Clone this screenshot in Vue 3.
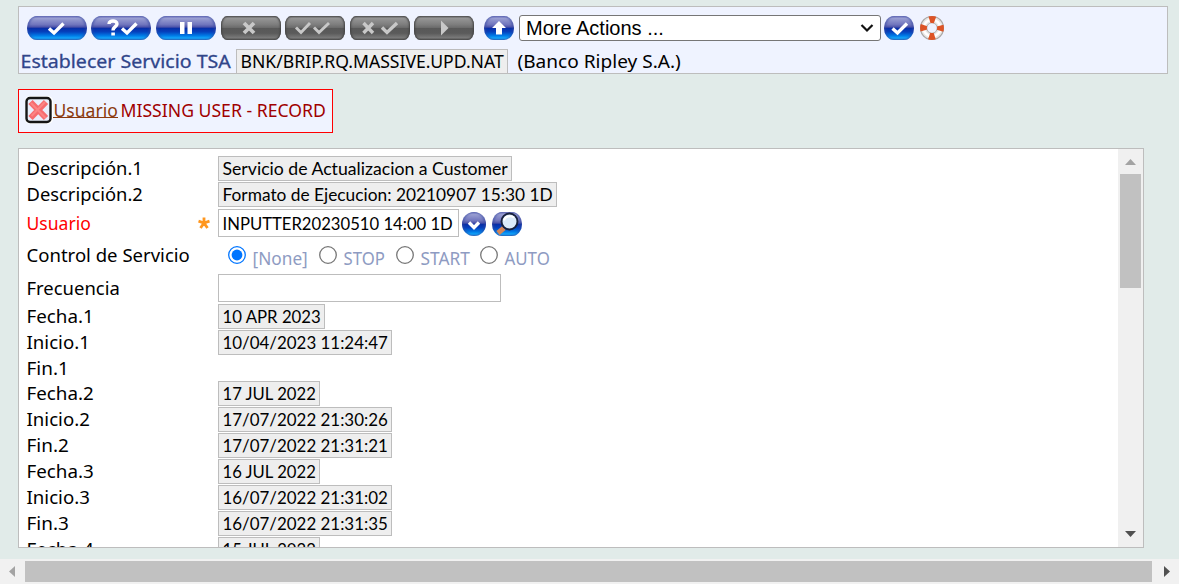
<script setup>
import { h } from 'vue'

// Single line of text fitted to a known advance width.
const Line = (p) =>
  h('svg', { class: 'line', width: p.w, height: p.h || 25 }, [
    h('text', { x: 0.5, y: p.base || 19, textLength: p.w - 0.7, lengthAdjust: 'spacingAndGlyphs' }, p.text),
  ])
Line.props = ['text', 'w', 'h', 'base']

const buttons = [
  { id: 'commit', on: true, gap: 4 },
  { id: 'validate', on: true, gap: 5 },
  { id: 'hold', on: true, gap: 4.5 },
  { id: 'delete', gap: 4.5 },
  { id: 'authorise', gap: 4.5 },
  { id: 'reverse', gap: 4.5 },
  { id: 'next', gap: 10 },
]

const intro = [
  { label: 'Descripción.1', lw: 117, value: 'Servicio de Actualizacion a Customer', vw: 286 },
  { label: 'Descripción.2', lw: 117, value: 'Formato de Ejecucion: 20210907 15:30 1D', vw: 331 },
]
const options = [
  { text: '[None]', w: 56, box: 91, checked: true },
  { text: 'STOP', w: 42, box: 77 },
  { text: 'START', w: 50, box: 84 },
  { text: 'AUTO', w: 46, box: 80 },
]
const history = [
  { label: 'Fecha.1', lw: 68, value: '10 APR 2023', vw: 99 },
  { label: 'Inicio.1', lw: 64, value: '10/04/2023 11:24:47', vw: 166 },
  { label: 'Fin.1', lw: 43, short: true },
  { label: 'Fecha.2', lw: 68, value: '17 JUL 2022', vw: 94 },
  { label: 'Inicio.2', lw: 64, value: '17/07/2022 21:30:26', vw: 166 },
  { label: 'Fin.2', lw: 43, value: '17/07/2022 21:31:21', vw: 166 },
  { label: 'Fecha.3', lw: 68, value: '16 JUL 2022', vw: 94 },
  { label: 'Inicio.3', lw: 64, value: '16/07/2022 21:31:02', vw: 166 },
  { label: 'Fin.3', lw: 43, value: '16/07/2022 21:31:35', vw: 166 },
  { label: 'Fecha.4', lw: 68, value: '15 JUL 2022', vw: 94 },
]
</script>

<template>
  <main class="page">
    <header class="toolbar">
      <div class="actions">
        <button v-for="b in buttons" :key="b.id" class="pill" :class="{ off: !b.on }" :style="{ marginRight: b.gap + 'px' }">
          <svg width="60" height="24" viewBox="0 0 60 24">
            <path v-if="b.id === 'commit'" class="stroke" d="M22 12.5l5 4.5 9.500-9.500" />
            <g v-else-if="b.id === 'validate'">
              <path class="stroke" d="M18 8c0-4 8-4 8 0 0 2.700-4 2.800-4 6.500" />
              <rect class="fill" x="20.300" y="16.500" width="3.600" height="3" />
              <path class="stroke" d="M31 12.500l5 4.500 9.500-9.500" />
            </g>
            <path v-else-if="b.id === 'hold'" class="fill" d="M24 6h4.500v12H24zM31.500 6H36v12h-4.500z" />
            <path v-else-if="b.id === 'delete'" class="stroke thick" d="M23 7l10 10M33 7L23 17" />
            <path v-else-if="b.id === 'authorise'" class="stroke thin" d="M11 11.500l5 5 9-9.500M29 11.500l5 5 10-9.500" />
            <path v-else-if="b.id === 'reverse'" class="stroke" d="M13.500 7l9.500 10M23 7l-9.500 10M32 11.500l5 5 10-9.500" />
            <path v-else class="fill" d="M27 4.500l7.500 7.500-7.500 7.500z" />
          </svg>
        </button>
        <button class="pill small up">
          <svg width="30" height="24"><path class="fill" d="M15 5l7 7h-4v6.500h-6V12H8z" /></svg>
        </button>
        <div class="select">
          <span>More Actions ...</span>
          <svg width="14" height="10"><path d="M1.500 2l5.500 5.500L12.500 2" fill="none" stroke="#111" stroke-width="2.200" /></svg>
        </div>
        <button class="pill small go">
          <svg width="30" height="24"><path class="stroke" d="M8.500 12.500l5 4.500 9.500-9.500" /></svg>
        </button>
        <svg class="buoy" width="24" height="24" viewBox="0 0 24 24">
          <circle cx="12" cy="12" r="8.500" fill="none" stroke="#aaa8a6" stroke-width="7.400" />
          <circle cx="12" cy="12" r="8.300" fill="none" stroke="#e9e7e4" stroke-width="5.400" />
          <circle cx="12" cy="12" r="8.300" fill="none" stroke="#fff" stroke-width="2.500" />
          <circle cx="12" cy="12" r="8.500" fill="none" stroke="#dd5426" stroke-width="6.800" stroke-dasharray="5.600 7.752" stroke-dashoffset="2.800" />
        </svg>
      </div>
      <div class="heading">
        <Line class="title" text="Establecer Servicio TSA" :w="211" />
        <div class="box record"><Line text="BNK/BRIP.RQ.MASSIVE.UPD.NAT" :w="264" /></div>
        <Line text="(Banco Ripley S.A.)" :w="164" />
      </div>
    </header>

    <section class="error">
      <svg width="28" height="28" viewBox="0 0 28 28">
        <rect width="28" height="28" rx="5" fill="#fff" />
        <rect x="1.500" y="2" width="24" height="24" rx="3.500" fill="#e9eefb" stroke="#151515" stroke-width="2.400" />
        <path d="M5.500 6l15.500 16M21 6L5.500 22" stroke="#f76b6e" stroke-width="6" />
        <path d="M6 7l14.500 15M20 6L6.500 20" stroke="#fb8584" stroke-width="2" />
      </svg>
      <a class="link"><Line text="Usuario" :w="65" /></a>
      <Line class="message" text="MISSING USER - RECORD" :w="206" />
    </section>

    <section class="panel">
      <div class="form">
        <div v-for="r in intro" :key="r.label" class="row">
          <div class="label"><Line :text="r.label" :w="r.lw" /></div>
          <div class="box value"><Line :text="r.value" :w="r.vw" /></div>
        </div>
        <div class="row user">
          <div class="label required">
            <Line text="Usuario" :w="65" :base="22" />
            <svg class="star" width="14" height="14" viewBox="-7 -7 14 14"><path d="M0 0V-5.500M0 0L5.500-1.800M0 0L3.500 5M0 0L-3.500 5M0 0L-5.500-1.800" stroke="#ff971f" stroke-width="2.800" /></svg>
          </div>
          <div class="field value filled"><Line text="INPUTTER20230510 14:00 1D" :w="231" /></div>
          <button class="pill drop"><svg width="24" height="24"><path class="stroke" d="M7 10.500l5 5 5-5" /></svg></button>
          <button class="pill small search">
            <svg width="30" height="24" viewBox="0 0 30 24">
              <path d="M6 21l6-5" stroke="#d58557" stroke-width="5" />
              <circle cx="17.500" cy="9.500" r="8" fill="#dceafa" stroke="#17203e" stroke-width="2" />
              <path d="M12 8.500a6 5 0 0 1 10-3" fill="none" stroke="#fff" stroke-width="2" />
            </svg>
          </button>
        </div>
        <div class="row control">
          <div class="label"><Line text="Control de Servicio" :w="164" :base="23" /></div>
          <div class="radios">
            <label v-for="o in options" :key="o.text" :style="{ width: o.box + 'px' }">
              <svg class="radio" width="18" height="18" viewBox="0 0 18 18">
                <circle cx="9" cy="9" r="8.300" fill="#fff" :stroke="o.checked ? '#0075ff' : '#767676'" stroke-width="1.300" />
                <circle v-if="o.checked" cx="9" cy="9" r="5.400" fill="#0075ff" />
              </svg>
              <Line :text="o.text" :w="o.w" :base="26" />
            </label>
          </div>
        </div>
        <div class="row freq">
          <div class="label"><Line text="Frecuencia" :w="94" :base="21" /></div>
          <div class="field empty"></div>
        </div>
        <div v-for="r in history" :key="r.label" class="row" :class="{ short: r.short }">
          <div class="label"><Line :text="r.label" :w="r.lw" /></div>
          <div v-if="r.value" class="box value"><Line :text="r.value" :w="r.vw" /></div>
        </div>
      </div>
      <div class="vscroll">
        <svg class="arrow" width="11" height="6"><path d="M5.500 0L11 6H0z" fill="#a3a3a3" /></svg>
        <div class="vthumb"></div>
        <svg class="arrow" width="11" height="6"><path d="M0 0h11L5.500 6z" fill="#505050" /></svg>
      </div>
    </section>

    <footer class="hscroll">
      <svg width="6" height="11"><path d="M6 0v11L0 5.500z" fill="#a3a3a3" /></svg>
      <div class="hthumb"></div>
      <svg width="6" height="11"><path d="M0 0v11l6-5.500z" fill="#505050" /></svg>
    </footer>
  </main>
</template>

<style>
body { margin: 0; overflow: hidden; }
.line { display: block; flex: none; overflow: visible; }
.line text { fill: currentColor; }
</style>

<style scoped>
* { box-sizing: border-box; }
.page {
  width: 1179px; height: 584px; padding-top: 6px; overflow: hidden;
  display: flex; flex-direction: column; background: #e1ebe9; color: #000;
  font: 18.600px "Noto Sans", "Open Sans", sans-serif;
}
.toolbar { width: 1150px; height: 68px; flex: none; margin-left: 18px; border: 1px solid #bdbdbd; background: #eff3ff; padding: 8px 0 0 8px; }
.actions { display: flex; height: 26px; align-items: center; }
.pill {
  display: block; flex: none; width: 60px; height: 24px; border: 0; padding: 0; overflow: hidden;
  border-radius: 10px / 12px;
  background: linear-gradient(#7277bd 0, #999ed2 10%, #7075bd 36%, #4950a8 47%, #092da5 50%, #0541bd 66%, #007be7 82%, #12a5fb 92%, #2475c9 100%);
  box-shadow: inset 2px 0 2px #3447a077, inset -2px 0 2px #3447a077;
}
.pill svg { display: block; }
.off {
  border-radius: 6px / 9px;
  background: linear-gradient(#626262 0, #969696 9%, #7e7e7e 35%, #6c6c6c 48%, #585858 51%, #5b5b5b 72%, #7a7a7a 91%, #555 100%);
  box-shadow: inset 1px 0 2px #444, inset -1px 0 2px #444;
}
.stroke { fill: none; stroke: #fff; stroke-width: 3.400; }
.fill { fill: #fff; }
.off .stroke { stroke: #c8c8c8; }
.off .fill { fill: #c8c8c8; }
.off .thick { stroke-width: 3.800; }
.off .thin { stroke-width: 2.900; }
.small { width: 30px; }
.up { margin-right: 5px; }
.select {
  width: 362px; height: 26px; flex: none; display: flex; align-items: center; justify-content: space-between;
  border: 1px solid #767676; border-radius: 3px; background: #fff; padding: 0 6px; margin-right: 3px;
  font: 20px "Liberation Sans", Arial, sans-serif;
}
.go { margin-right: 6px; }
.heading { display: flex; height: 25px; margin: 8px 0 0 -7px; }
.title { color: #30458a; margin-right: 5px; stroke: #30458a; stroke-width: .3px; }
.box { height: 25px; flex: none; border: 1px solid #bdbdbd; background: #eee; padding: 0 3px; }
.box .line, .filled .line { margin-top: -1px; }
.record { margin-right: 9px; width: 272px; }
.error { display: flex; flex: none; width: 315px; height: 44px; margin: 15px 0 0 18px; border: 1px solid #f00; background: #eff3ff; padding: 6px 0 0 6px; }
.link { display: block; height: 22px; border-bottom: 1px solid #8b3a0e; color: #8b3a0e; margin-right: 2px; }
.error .link .line, .message { margin-top: 2px; }
.message { color: #a00000; }
.panel { display: flex; flex: none; width: 1126px; height: 400px; margin: 15px 0 0 18px; border: 1px solid #bdbdbd; background: #fff; overflow: hidden; }
.form { width: 1099px; flex: none; padding: 7px 0 0 7px; }
.row { display: flex; height: 26px; }
.row.short { height: 25px; }
.label { width: 192px; flex: none; }
.value { font-family: Lato, sans-serif; font-size: 16.500px; }
.user { height: 31px; }
.required { display: flex; justify-content: space-between; color: #f00; padding-right: 7px; }
.star { margin-top: 8px; }
.field { border: 1px solid #bdbdbd; height: 28px; flex: none; background: #fff; }
.filled { width: 241px; padding: 2px 0 0 3px; margin: 1px 3px 0 0; }
.drop { width: 24px; margin: 4px 6px 0 0; border-radius: 12px; }
.search { margin-top: 4px; }
.control { height: 35px; }
.radios { display: flex; padding-left: 10px; color: #8e9bc2; }
.radios label { display: flex; gap: 6px; }
.radio { margin-top: 7px; flex: none; }
.freq { height: 30px; }
.empty { width: 283px; }
.vscroll { width: 25px; height: 398px; background: #f0f0f0; flex: none; display: flex; flex-direction: column; align-items: center; padding: 10px 0; }
.vthumb { width: 21px; height: 114px; background: #c1c1c1; margin: 9px 0 auto; }
.hscroll { height: 25px; flex: none; margin-top: 11px; background: #f1f1f1; display: flex; align-items: center; padding: 0 9px; }
.hthumb { width: 1127px; height: 21px; background: #c1c1c1; margin: 0 12px 0 10px; }
</style>
